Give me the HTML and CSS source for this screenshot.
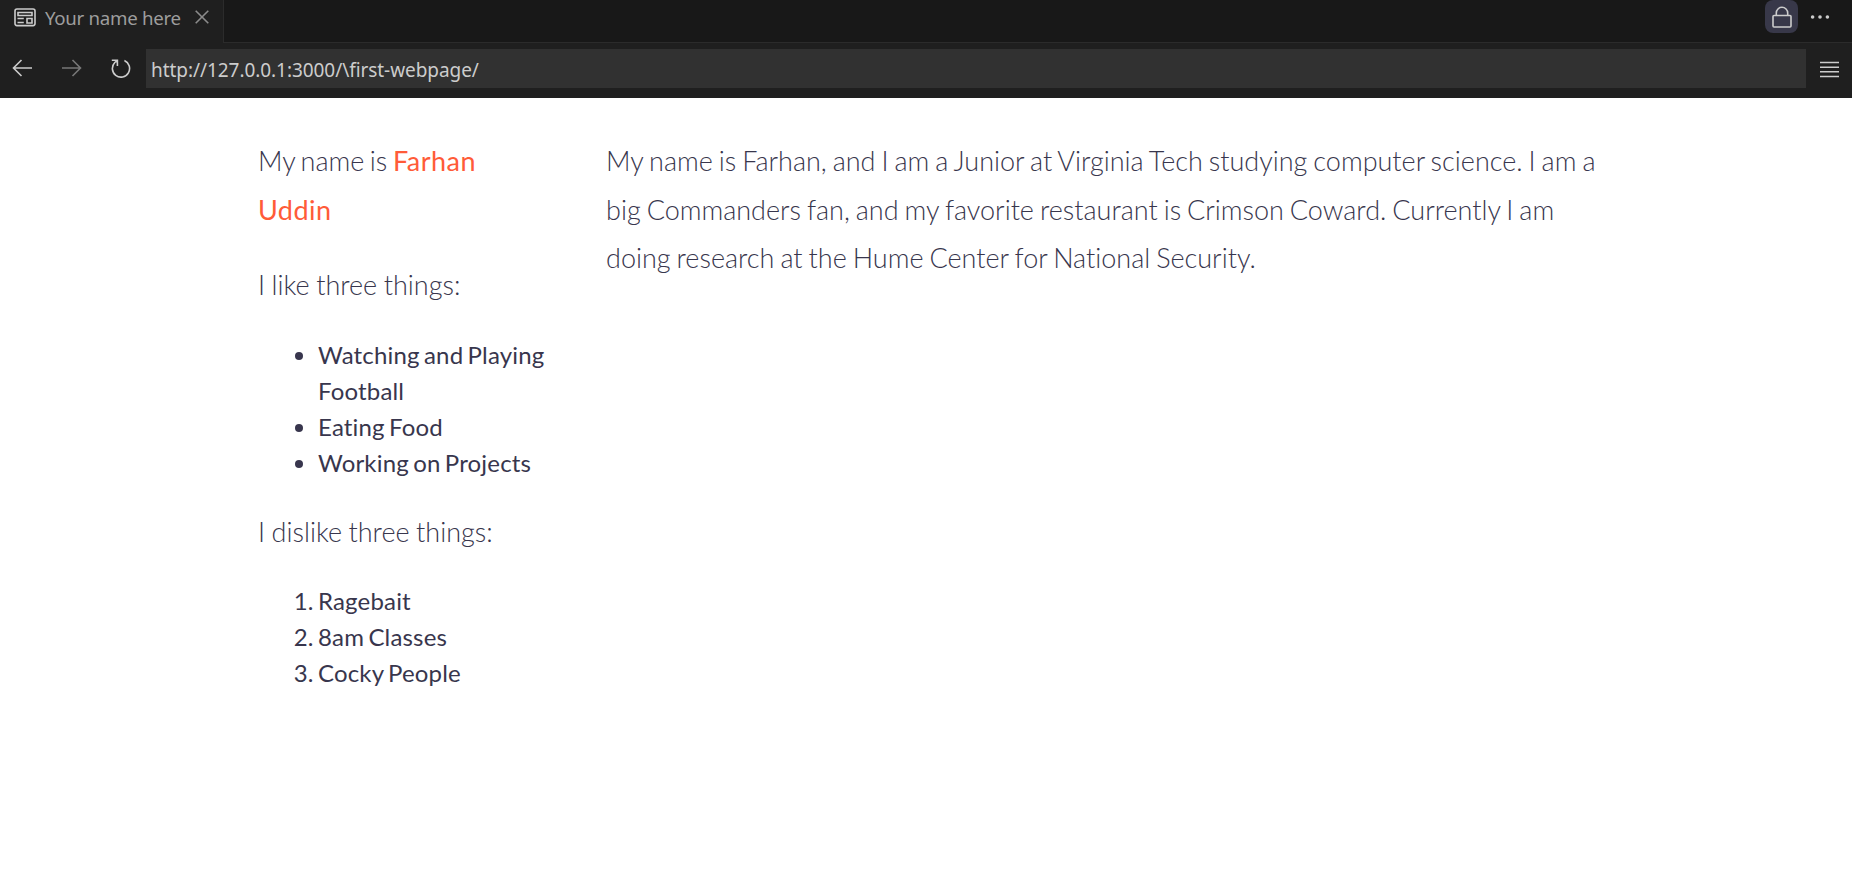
FILE: index.html
```html
<!DOCTYPE html>
<html lang="en">
<head>
<meta charset="utf-8">
<title>Your name here</title>
<link rel="stylesheet" href="styles.css">
</head>
<body>
<header class="tabs">
  <div class="tab">
    <svg class="tab-icon" width="22" height="19" viewBox="0 0 22 19"><rect x="1" y="1" width="20" height="16.6" rx="2"/><path d="M4 4.5h14v3H4zM13 10.5h5v4.5h-5zM3.5 10.5h6.3M3.5 14.5h6.3"/></svg>
    <span class="tab-title">Your name here</span>
    <svg class="tab-close" width="14" height="14" viewBox="0 0 14 14"><path d="M.7.7l12.6 12.6M13.3.7L.7 13.3"/></svg>
  </div>
  <div class="tab-actions">
    <span class="lock"><svg width="20" height="24" viewBox="0 0 20 24"><rect x="1" y="9.5" width="18" height="11.5" rx="1"/><path d="M4.3 9.5V7a5.7 5.7 0 0 1 11.4 0v2.5"/></svg></span>
    <svg class="more" width="20" height="6" viewBox="0 0 20 6"><circle cx="2.6" cy="3" r="1.8"/><circle cx="10" cy="3" r="1.8"/><circle cx="17.4" cy="3" r="1.8"/></svg>
  </div>
</header>
<nav class="toolbar">
  <svg class="back" width="20" height="18" viewBox="0 0 20 18"><path d="M9.5 1L1.5 9l8 8M1.5 9H20"/></svg>
  <svg class="forward" width="20" height="18" viewBox="0 0 20 18"><path d="M10.5 1l8 8-8 8M18.5 9H0"/></svg>
  <svg class="reload" width="20" height="20" viewBox="0 0 20 20"><path d="M13.4 1.6a8.6 8.6 0 1 1-9.6 1.9L6.4 1.3M0.8 1.3h5.6v5.6"/></svg>
  <div class="address">http://127.0.0.1:3000/\first-webpage/</div>
  <svg class="menu" width="19" height="17" viewBox="0 0 19 17"><path d="M0 1.5h19M0 6.2h19M0 10.8h19M0 15.5h19"/></svg>
</nav>
<main class="page">
  <section class="likes">
    <p class="intro">My name is <strong>Farhan Uddin</strong></p>
    <p>I like three things:</p>
    <ul>
      <li>Watching and Playing Football</li>
      <li>Eating Food</li>
      <li>Working on Projects</li>
    </ul>
    <p>I dislike three things:</p>
    <ol>
      <li>Ragebait</li>
      <li>8am Classes</li>
      <li>Cocky People</li>
    </ol>
  </section>
  <section class="about">
    <p>My name is Farhan, and I am a Junior at Virginia Tech studying computer science. I am a big Commanders fan, and my favorite restaurant is Crimson Coward. Currently I am doing research at the Hume Center for National Security.</p>
  </section>
</main>
</body>
</html>
```
FILE: styles.css
```css
* { box-sizing: border-box; }
body {
  margin: 0;
  background: #fff;
  color: #38364d;
  font: 24px/36px Lato, sans-serif;
  font-variant-ligatures: none;
}
svg { flex: none; fill: none; stroke: #ccc; stroke-width: 1.6; }
.tabs {
  display: flex;
  justify-content: space-between;
  height: 43px;
  background: #181818;
  box-shadow: inset 0 -1px #2b2b2b;
}
.tab {
  display: flex;
  width: 224px;
  padding-left: 14px;
  background: #1f1f1f;
  border-right: 1px solid #2b2b2b;
  font: 18.7px/36px "Noto Sans", sans-serif;
  letter-spacing: -0.3px;
  color: #9d9d9d;
}
.tab-icon { margin-top: 8px; }
.tab-title { width: 150px; margin-left: 9px; white-space: nowrap; }
.tab-close { margin-top: 10px; stroke: #8b8b8b; }
.tab-actions { display: flex; padding-right: 22px; gap: 12px; }
.lock {
  display: flex;
  justify-content: center;
  width: 33px;
  height: 33px;
  padding-top: 6px;
  border-radius: 8px;
  background: #383849;
}
.more { margin-top: 14px; fill: #ccc; stroke: none; }
.toolbar {
  display: flex;
  align-items: flex-start;
  height: 55px;
  padding: 6px 13px 0 12px;
  background: #1f1f1f;
}
.back { margin-top: 10px; }
.forward { margin: 10px 0 0 30px; stroke: #777; }
.reload { margin: 10px 0 0 29px; }
.address {
  flex: 1;
  height: 39px;
  margin: 0 14px 0 15px;
  padding-left: 5px;
  background: #313131;
  color: #ccc;
  font: 19px/42px "Noto Sans", sans-serif;
  letter-spacing: -0.06px;
}
.menu { margin-top: 12px; }
.page {
  display: grid;
  grid-template-columns: 288px 992px;
  column-gap: 60px;
  width: 1336px;
  margin: 0 auto;
  padding-top: 12px;
}
p {
  margin: 27px 0;
  font-size: 27px;
  font-weight: 300;
  line-height: 48.6px;
  word-spacing: -0.8px;
}
.about p { word-spacing: -1.35px; }
.intro { word-spacing: -1.8px; }
strong { color: #ff5b38; font-weight: 400; letter-spacing: 0.5px; }
ul, ol {
  margin: 27px 0;
  padding-left: 60px;
  letter-spacing: 0.17px;
  word-spacing: -2px;
}
```
